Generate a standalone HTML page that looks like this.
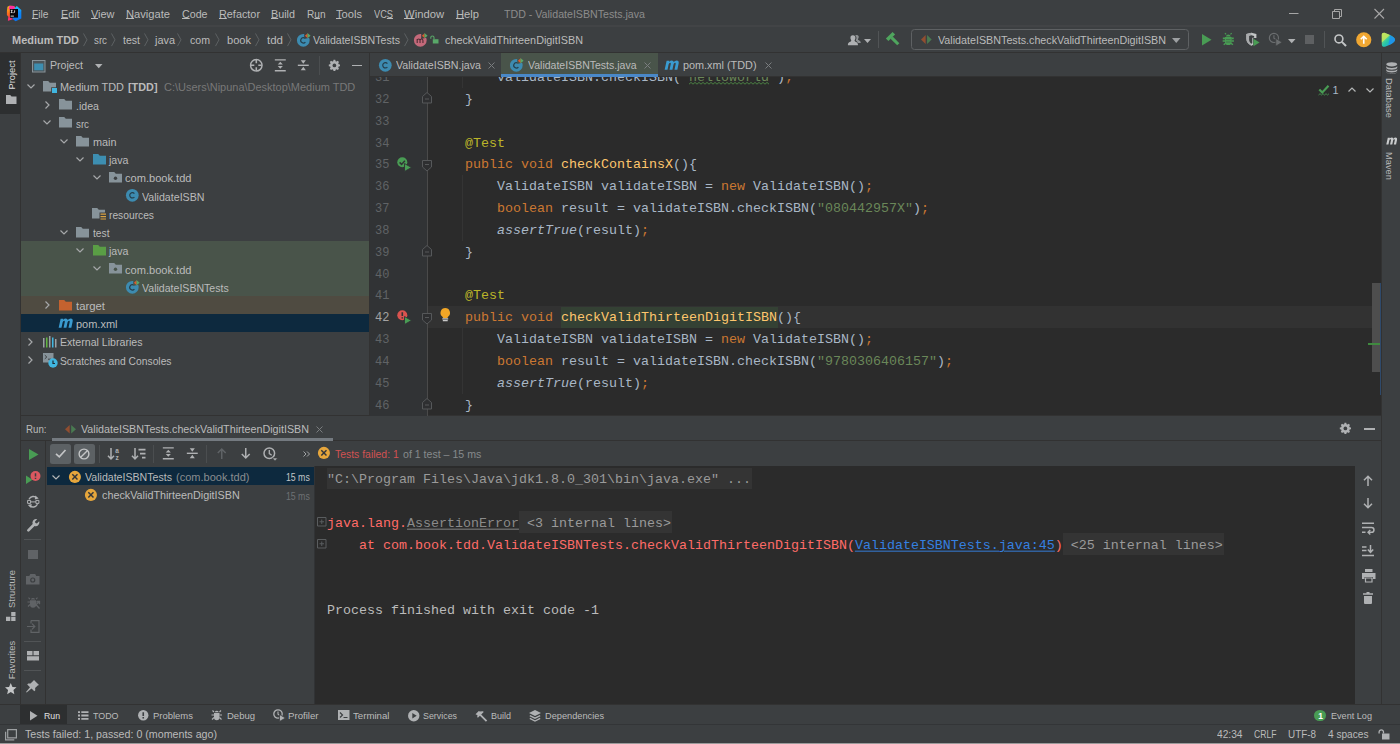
<!DOCTYPE html>
<html><head><meta charset="utf-8"><title>TDD</title>
<style>
*{box-sizing:border-box;margin:0;padding:0}
html,body{width:1400px;height:744px;overflow:hidden;background:#3c3f41}
body{font-family:"Liberation Sans",sans-serif;font-size:11px;color:#bbbbbb;position:relative}
.abs{position:absolute}
.t{position:absolute;white-space:pre;line-height:1;transform-origin:0 0}
svg{position:absolute;overflow:visible}
u{text-decoration-thickness:0.8px;text-underline-offset:0.2px}
.k{color:#cc7832}.s{color:#6a8759}.a{color:#bbb529}.m{color:#ffc66d}
.cl{position:absolute;white-space:pre;line-height:1;font-family:"Liberation Mono",monospace;font-size:13.333px;color:#a9b7c6;transform-origin:0 50%;transform:scaleY(0.94)}
.fold{background:#3a3a3a;color:#9a9a9a}

</style></head><body>
<div class="abs" style="left:0px;top:0px;width:1400px;height:27px;background:#3c3f41;"></div>
<div class="abs" style="left:0px;top:25.2px;width:1400px;height:2px;background:#424446;"></div>
<div class="abs" style="left:0px;top:27px;width:1400px;height:25px;background:#3c3f41;"></div>
<div class="abs" style="left:0px;top:52px;width:1400px;height:1px;background:#323232;"></div>
<div class="abs" style="left:0px;top:53px;width:20px;height:652px;background:#3c3f41;"></div>
<div class="abs" style="left:19.6px;top:53px;width:1px;height:652px;background:#323232;"></div>
<div class="abs" style="left:0px;top:53px;width:19.6px;height:61px;background:#2d2f30;"></div>
<div class="abs" style="left:20.6px;top:53px;width:348.4px;height:362px;background:#3c3f41;"></div>
<div class="abs" style="left:369px;top:53px;width:1px;height:362px;background:#323232;"></div>
<div class="abs" style="left:370px;top:53px;width:1011px;height:24px;background:#3c3f41;"></div>
<div class="abs" style="left:370px;top:76px;width:1011px;height:1px;background:#323232;"></div>
<div class="abs" style="left:370px;top:77px;width:1011px;height:339px;background:#2b2b2b;"></div>
<div class="abs" style="left:1381px;top:53px;width:19px;height:652px;background:#3c3f41;"></div>
<div class="abs" style="left:1381px;top:53px;width:1px;height:652px;background:#323232;"></div>
<div class="abs" style="left:21px;top:415px;width:1360px;height:1px;background:#323232;"></div>
<div class="abs" style="left:21px;top:416px;width:1360px;height:24px;background:#3c3f41;"></div>
<div class="abs" style="left:21px;top:440px;width:1360px;height:1px;background:#323232;"></div>
<div class="abs" style="left:21px;top:441px;width:1360px;height:264px;background:#3c3f41;"></div>
<div class="abs" style="left:45px;top:441px;width:1px;height:264px;background:#323232;"></div>
<div class="abs" style="left:314px;top:466px;width:1041px;height:239px;background:#2b2b2b;"></div>
<div class="abs" style="left:314px;top:466px;width:1px;height:239px;background:#313335;"></div>
<div class="abs" style="left:0px;top:704px;width:1400px;height:1px;background:#323232;"></div>
<div class="abs" style="left:0px;top:705px;width:1400px;height:19px;background:#3c3f41;"></div>
<div class="abs" style="left:0px;top:724px;width:1400px;height:1px;background:#333537;"></div>
<div class="abs" style="left:0px;top:725px;width:1400px;height:18px;background:#3c3f41;"></div>
<div class="abs" style="left:0px;top:742.6px;width:1400px;height:1.4px;background:#9a9a9a;"></div>
<svg style="left:6px;top:5px;" width="16" height="17" viewBox="6 5 16 17"><defs><linearGradient id="lgA" x1="0" y1="0" x2="0" y2="1"><stop offset="0" stop-color="#fdc21a"/><stop offset=".55" stop-color="#fc6a1d"/><stop offset="1" stop-color="#fe2d6b"/></linearGradient>
<linearGradient id="lgB" x1="0" y1="0" x2="0" y2="1"><stop offset="0" stop-color="#21d0fb"/><stop offset=".4" stop-color="#0e8cfb"/><stop offset="1" stop-color="#0a72f0"/></linearGradient></defs>
<polygon points="7.500,6.800 9.500,5.800 14,5.900 15.500,8.500 12,12 9,20.300 7.900,20.500 8.600,17 6.900,15 6.900,11" fill="url(#lgA)"/>
<polygon points="9.500,5.800 14,5.900 15.500,8.500 11,10 8.500,9" fill="#fe2e9d"/>
<polygon points="15.300,7.500 16.800,5.900 21.300,10 21.300,18.500 15.700,21.200 12.800,19.200 12,12" fill="url(#lgB)"/>
<polygon points="8.600,17 13.500,19 9,20.400 7.900,20.500" fill="#fe2d75"/>
<rect x="9.900" y="9" width="8.100" height="8.600" fill="#0a0508"/>
<rect x="10.600" y="15.700" width="3.300" height=".8" fill="#fff"/>
<path d="M10.700 10.300h1.900M11.650 10.300v2.300M10.700 12.600h1.900M14.600 10.300v1.700q0 .7-.8 .7h-.5" stroke="#fff" stroke-width=".75" fill="none"/></svg>
<div class="t" style="left:32px;top:8.76px;font-size:11.4px;color:#bbbbbb;transform:scaleX(0.8987);"><u>F</u>ile</div>
<div class="t" style="left:60.5px;top:8.76px;font-size:11.4px;color:#bbbbbb;transform:scaleX(0.9419);"><u>E</u>dit</div>
<div class="t" style="left:90.5px;top:8.76px;font-size:11.4px;color:#bbbbbb;transform:scaleX(0.9598);"><u>V</u>iew</div>
<div class="t" style="left:126px;top:8.76px;font-size:11.4px;color:#bbbbbb;transform:scaleX(0.9785);"><u>N</u>avigate</div>
<div class="t" style="left:181.5px;top:8.76px;font-size:11.4px;color:#bbbbbb;transform:scaleX(0.9363);"><u>C</u>ode</div>
<div class="t" style="left:219px;top:8.76px;font-size:11.4px;color:#bbbbbb;transform:scaleX(0.9521);"><u>R</u>efactor</div>
<div class="t" style="left:271px;top:8.76px;font-size:11.4px;color:#bbbbbb;transform:scaleX(0.9470);"><u>B</u>uild</div>
<div class="t" style="left:306.5px;top:8.76px;font-size:11.4px;color:#bbbbbb;transform:scaleX(0.8849);">R<u>u</u>n</div>
<div class="t" style="left:336px;top:8.76px;font-size:11.4px;color:#bbbbbb;transform:scaleX(0.9777);"><u>T</u>ools</div>
<div class="t" style="left:374px;top:8.76px;font-size:11.4px;color:#bbbbbb;transform:scaleX(0.8112);">VC<u>S</u></div>
<div class="t" style="left:404px;top:8.76px;font-size:11.4px;color:#bbbbbb;transform:scaleX(0.9873);"><u>W</u>indow</div>
<div class="t" style="left:456px;top:8.76px;font-size:11.4px;color:#bbbbbb;transform:scaleX(0.9813);"><u>H</u>elp</div>
<div class="t" style="left:503.5px;top:8.76px;font-size:11.4px;color:#8c8c8c;transform:scaleX(0.9332);">TDD - ValidateISBNTests.java</div>
<svg style="left:1288px;top:8px;" width="100" height="12" viewBox="0 0 100 12"><path d="M1 5.5h9.5" stroke="#a6a6a6" stroke-width="1" fill="none"/><path d="M44.5 3.5h7v7h-7zM46.5 3.5v-2h7v7h-2" stroke="#a6a6a6" stroke-width="1" fill="none"/><path d="M86.5 1l9.5 9.5M96 1l-9.5 9.5" stroke="#a6a6a6" stroke-width="1.1" fill="none"/></svg>
<div class="t" style="left:12px;top:34.76px;font-size:11.4px;color:#bbbbbb;font-weight:700;transform:scaleX(0.9625);">Medium TDD</div>
<div class="t" style="left:94px;top:34.76px;font-size:11.4px;color:#bbbbbb;transform:scaleX(0.8560);">src</div>
<div class="t" style="left:123px;top:34.76px;font-size:11.4px;color:#bbbbbb;transform:scaleX(0.9252);">test</div>
<div class="t" style="left:155px;top:34.76px;font-size:11.4px;color:#bbbbbb;transform:scaleX(0.9567);">java</div>
<div class="t" style="left:190px;top:34.76px;font-size:11.4px;color:#bbbbbb;transform:scaleX(0.9289);">com</div>
<div class="t" style="left:227px;top:34.76px;font-size:11.4px;color:#bbbbbb;transform:scaleX(0.9715);">book</div>
<div class="t" style="left:267px;top:34.76px;font-size:11.4px;color:#bbbbbb;transform:scaleX(1.0099);">tdd</div>
<div class="t" style="left:313px;top:34.76px;font-size:11.4px;color:#bbbbbb;transform:scaleX(0.9305);">ValidateISBNTests</div>
<div class="t" style="left:445px;top:34.76px;font-size:11.4px;color:#bbbbbb;transform:scaleX(0.9491);">checkValidThirteenDigitISBN</div>
<svg style="left:83px;top:33.2px;" width="4.5" height="13.6" viewBox="0 0 4.5 13.6"><path d="M0.5 0.5L4 6.800L0.5 13.100" stroke="#5c6062" stroke-width="1" fill="none"/></svg>
<svg style="left:111px;top:33.2px;" width="4.5" height="13.6" viewBox="0 0 4.5 13.6"><path d="M0.5 0.5L4 6.800L0.5 13.100" stroke="#5c6062" stroke-width="1" fill="none"/></svg>
<svg style="left:143.5px;top:33.2px;" width="4.5" height="13.6" viewBox="0 0 4.5 13.6"><path d="M0.5 0.5L4 6.800L0.5 13.100" stroke="#5c6062" stroke-width="1" fill="none"/></svg>
<svg style="left:177px;top:33.2px;" width="4.5" height="13.6" viewBox="0 0 4.5 13.6"><path d="M0.5 0.5L4 6.800L0.5 13.100" stroke="#5c6062" stroke-width="1" fill="none"/></svg>
<svg style="left:214.5px;top:33.2px;" width="4.5" height="13.6" viewBox="0 0 4.5 13.6"><path d="M0.5 0.5L4 6.800L0.5 13.100" stroke="#5c6062" stroke-width="1" fill="none"/></svg>
<svg style="left:254.5px;top:33.2px;" width="4.5" height="13.6" viewBox="0 0 4.5 13.6"><path d="M0.5 0.5L4 6.800L0.5 13.100" stroke="#5c6062" stroke-width="1" fill="none"/></svg>
<svg style="left:286.5px;top:33.2px;" width="4.5" height="13.6" viewBox="0 0 4.5 13.6"><path d="M0.5 0.5L4 6.800L0.5 13.100" stroke="#5c6062" stroke-width="1" fill="none"/></svg>
<svg style="left:404px;top:33.2px;" width="4.5" height="13.6" viewBox="0 0 4.5 13.6"><path d="M0.5 0.5L4 6.800L0.5 13.100" stroke="#5c6062" stroke-width="1" fill="none"/></svg>
<svg style="left:296.3px;top:32.7px;" width="14.6" height="14.6" viewBox="0 0 16 16"><path d="M8 1a7 7 0 1 0 7 7 7 7 0 0 0-.6-2.8L9 6.5V1.1A7 7 0 0 0 8 1z" fill="#3d8bb0"/><path d="M10.300 9.900a2.900 2.900 0 1 1-1.300-4.600" stroke="#20313b" stroke-width="1.300" fill="none" opacity=".85"/><path d="M9.8 3l3-2.8v5.6z" fill="#e05a2b"/><path d="M12.6 0l3.4 2.9-3.4 2.9z" fill="#59a869"/></svg>
<svg style="left:413px;top:32.7px;" width="14.6" height="14.6" viewBox="0 0 16 16"><path d="M8 1a7 7 0 1 0 7 7 7 7 0 0 0-.6-2.8L9 6.5V1.1A7 7 0 0 0 8 1z" fill="#c4697a"/><path d="M4.6 11V6.6M4.6 8q.2-1.4 1.6-1.4 1.5 0 1.5 1.6V11M7.7 8.2q.2-1.6 1.7-1.6 1.5 0 1.5 1.6V11" stroke="#3a2228" stroke-width="1.2" fill="none" opacity=".85"/><path d="M9.8 3l3-2.8v5.6z" fill="#e05a2b"/><path d="M12.6 0l3.4 2.9-3.4 2.9z" fill="#59a869"/></svg>
<svg style="left:429.5px;top:35px;" width="9" height="9" viewBox="0 0 9 9"><path d="M2.800 4.200h5.700v4.300H2.800z" fill="#59a869"/><path d="M4 4.200V2.600a1.600 1.600 0 0 0-3.200 0v1.200" stroke="#59a869" stroke-width="1.100" fill="none"/></svg>
<svg style="left:846.5px;top:32.5px;" width="14.6" height="14.6" viewBox="0 0 16 16"><path d="M10.5 2.2a2.3 2.3 0 0 1 2 3.6c-.2.5-.5.8-.5 1.300 0 .9 3 1 3 3.400V11h-3.300c0-2-2-2.300-2-3.100 0-.7.700-1 .700-2.400 0-1.300-.6-2.300-1.500-2.800.4-.3 1-.5 1.600-.5z" fill="#8f9294"/><path d="M6.500 2.500A2.700 2.700 0 0 1 9.200 5.400c0 1.600-.9 2-.9 3 0 1.200 3.700 1.200 3.700 4.200V13.500H1V12.600c0-3 3.700-3 3.700-4.200 0-1-.9-1.400-.9-3A2.700 2.700 0 0 1 6.500 2.500z" fill="#afb1b3"/></svg>
<svg style="left:863.5px;top:38.5px;" width="7" height="4" viewBox="0 0 7 4"><path d="M0 0h7L3.500 4z" fill="#afb1b3"/></svg>
<div class="abs" style="left:878px;top:31px;width:1px;height:17px;background:#515456;"></div>
<svg style="left:885.5px;top:32.3px;" width="14.6" height="14.6" viewBox="0 0 16 16"><g transform="rotate(-45 8 8)"><rect x="2.800" y="1.700" width="10.400" height="3.900" fill="#4fa55e"/><rect x="6.300" y="5.400" width="3.400" height="10.300" fill="#4fa55e"/></g></svg>
<div class="abs" style="left:911px;top:29px;width:278px;height:21px;border:1px solid #5e6163;border-radius:3.500px;background:#3c3f41"></div>
<svg style="left:920.7px;top:35.1px;" width="10.7" height="9" viewBox="0 0 10.700 9"><path d="M4.600 0v9L0 4.500z" fill="#914e30"/><path d="M6.100 0v9L10.700 4.500z" fill="#497a51"/></svg>
<div class="t" style="left:937.5px;top:34.76px;font-size:11.4px;color:#bbbbbb;transform:scaleX(0.9419);">ValidateISBNTests.checkValidThirteenDigitISBN</div>
<svg style="left:1172px;top:37.5px;" width="8.5" height="5" viewBox="0 0 8.500 5"><path d="M0 0h8.500L4.250 5z" fill="#9da0a2"/></svg>
<svg style="left:1201.5px;top:34px;" width="9.5" height="11.5" viewBox="0 0 9.500 11.500"><path d="M0 0L9.500 5.750 0 11.500z" fill="#499c54"/></svg>
<svg style="left:1221.3px;top:32.2px;" width="14.6" height="14.6" viewBox="0 0 16 16"><path d="M5.600 2.700L4.300 1.200M10.400 2.700l1.300-1.500" stroke="#499c54" stroke-width="1.300" fill="none"/><path d="M5.300 4.800a2.800 2.800 0 0 1 5.400 0z" fill="#499c54"/><path d="M4.300 5.600h7.400v5a3.700 3.700 0 0 1-7.400 0z" fill="#499c54"/><path d="M4.500 7H2M11.500 7H14M4.500 9.800H1.800M11.500 9.800h2.700M5 12.300l-2 1.700M11 12.300l2 1.700" stroke="#499c54" stroke-width="1.700" fill="none"/><path d="M5.500 8.300h5M5.500 11h5" stroke="#3c3f41" stroke-width=".9" opacity=".55"/></svg>
<svg style="left:1245px;top:32.2px;" width="14.6" height="14.6" viewBox="0 0 16 16"><path d="M1.500 2.300L7 .8l5.500 1.500v4.200H9V14l-2 1C3.500 13 1.500 10.800 1.500 7.300z" fill="#c4c6c7"/><path d="M7 .8V15C3.500 13 1.500 10.800 1.500 7.300V2.300z" fill="#a8aaac"/><path d="M4.500 4.300L7 3.600l3 .8v2H8v5.800l-1 .6c-1.700-1.200-2.500-2.500-2.500-4.500z" fill="#3c3f41"/><path d="M9.300 7.300l6.700 4.100-6.700 4.100z" fill="#499c54"/></svg>
<svg style="left:1267.5px;top:32.2px;" width="14.6" height="14.6" viewBox="0 0 16 16"><circle cx="6.500" cy="6.500" r="5" stroke="#6b6e70" stroke-width="1.300" fill="none"/><path d="M6.500 3.500v3.300l2 1.200" stroke="#6b6e70" stroke-width="1.200" fill="none"/><path d="M8.500 7l7 4.300-7 4.300z" fill="#6b6e70" stroke="#3c3f41" stroke-width=".8"/></svg>
<svg style="left:1288px;top:38.5px;" width="7.5" height="4.2" viewBox="0 0 7.500 4.200"><path d="M0 0h7.500L3.750 4.200z" fill="#afb1b3"/></svg>
<div class="abs" style="left:1305px;top:35px;width:9.3px;height:9.3px;background:#5e6062;"></div>
<div class="abs" style="left:1324px;top:31px;width:1px;height:17px;background:#515456;"></div>
<svg style="left:1333px;top:32.5px;" width="14.6" height="14.6" viewBox="0 0 16 16"><circle cx="6.500" cy="6.500" r="4.300" stroke="#c3c5c6" stroke-width="1.800" fill="none"/><path d="M9.700 9.700L14.300 14.300" stroke="#c3c5c6" stroke-width="2.200" fill="none"/></svg>
<svg style="left:1356px;top:32px;" width="15.5" height="15.5" viewBox="0 0 15.500 15.500"><circle cx="7.750" cy="7.750" r="7.600" fill="#f0a732"/><path d="M7.750 11.800V4.500M4.800 7.300l2.950-3 2.950 3" stroke="#fff" stroke-width="1.600" fill="none"/></svg>
<svg style="left:1380.5px;top:32px;" width="14.5" height="15.5" viewBox="0 0 14.500 15.500"><defs><linearGradient id="lg2" x1="0" y1="0" x2="1" y2="1"><stop offset="0" stop-color="#c9e45c"/><stop offset=".5" stop-color="#27c7a7"/><stop offset="1" stop-color="#1e8ff0"/></linearGradient></defs><path d="M.8 3C.8 1.200 2.300.3 4 .9c5 1.700 10 4 10 6.900s-5 5.200-10 6.900C2.300 15.300.8 14.300.8 12.500z" fill="url(#lg2)"/><path d="M.8 3C.8 1.200 2.300.3 4 .9c2 .7 3.500 1.300 5 2.100L.8 10.500z" fill="#c7e85a" opacity=".85"/><path d="M9 3c3 1.500 5 3 5 4.800 0 2-3 3.800-6.500 5.400z" fill="#1d8df2" opacity=".8"/></svg>
<div class="t" style="left:11.8px;top:75px;font-size:9.6px;color:#dcdcdc;transform:translate(-50%,-50%) rotate(-90deg) scaleX(0.97);transform-origin:50% 50%">Project</div>
<svg style="left:5.5px;top:95px;" width="10.5" height="9" viewBox="0 0 10.500 9"><path d="M0 0h4.200l1.300 1.500H10.500V9H0z" fill="#afb1b3"/></svg>
<div class="t" style="left:11.8px;top:588.5px;font-size:9.6px;color:#bbbbbb;transform:translate(-50%,-50%) rotate(-90deg) scaleX(0.97);transform-origin:50% 50%">Structure</div>
<svg style="left:6px;top:612px;" width="9.5" height="9" viewBox="0 0 9.500 9"><path d="M0 4.800h4.300V9H0zM5.200 4.800h4.300V9H5.200zM5.200 0h4.300v4H5.200z" fill="#afb1b3"/></svg>
<div class="t" style="left:11.8px;top:659.5px;font-size:9.6px;color:#bbbbbb;transform:translate(-50%,-50%) rotate(-90deg) scaleX(0.97);transform-origin:50% 50%">Favorites</div>
<svg style="left:5px;top:682.5px;" width="11.5" height="11.5" viewBox="0 0 11.500 11.500"><path d="M5.750 0l1.700 3.900 4.050.4-3.050 2.800.9 4.100-3.600-2.200-3.600 2.200.9-4.100L0 4.300l4.050-.4z" fill="#c4c6c7"/></svg>
<svg style="left:1385.5px;top:61.5px;" width="11.5" height="12" viewBox="0 0 11.500 12"><ellipse cx="5.750" cy="2.300" rx="5.500" ry="2.100" fill="#afb1b3"/><path d="M.25 4c0 2.600 11 2.600 11 0v1.700c0 2.600-11 2.600-11 0zM.25 6.900c0 2.600 11 2.600 11 0v1.700c0 2.600-11 2.600-11 0zM.25 9.800c0 2.600 11 2.600 11 0v0c0 3-11 3-11 0z" fill="#afb1b3"/></svg>
<div class="t" style="left:1389.3px;top:97.5px;font-size:9.6px;color:#bbbbbb;transform:translate(-50%,-50%) rotate(90deg) scaleX(0.97);transform-origin:50% 50%">Database</div>
<svg style="left:1384.5px;top:133.5px;" width="13.5" height="13.5" viewBox="0 0 16 16"><path d="M1.500 12.500L3.300 4.300H5.800L5.600 5.400Q6.700 4.100 8.100 4.100 9.600 4.100 9.800 5.500 11 4.100 12.500 4.100 14.800 4.100 14.300 6.800L13.100 12.500H10.500L11.600 7.300Q11.800 6.200 11 6.200 10 6.200 9.600 7.800L8.600 12.500H6L7.100 7.300Q7.300 6.200 6.500 6.200 5.500 6.200 5.100 7.800L4.100 12.500z" fill="#c9cbcc"/></svg>
<div class="t" style="left:1389.3px;top:166px;font-size:9.6px;color:#bbbbbb;transform:translate(-50%,-50%) rotate(90deg) scaleX(0.97);transform-origin:50% 50%">Maven</div>
<svg style="left:32px;top:59.5px;" width="13.5" height="12.5" viewBox="0 0 13.500 12.500"><rect x=".5" y=".5" width="12.500" height="11.500" fill="#4d565b" stroke="#87939a" stroke-width="1"/><rect x="2.200" y="3.500" width="9.100" height="6.800" fill="#3d8eb1"/></svg>
<div class="t" style="left:50px;top:60.26px;font-size:11.4px;color:#bbbbbb;transform:scaleX(0.9308);">Project</div>
<svg style="left:95px;top:63.8px;" width="7.5" height="4.3" viewBox="0 0 7.500 4.300"><path d="M0 0h7.500L3.750 4.300z" fill="#afb1b3"/></svg>
<svg style="left:248.7px;top:58.2px;" width="14.6" height="14.6" viewBox="0 0 16 16"><circle cx="8" cy="8" r="6.300" stroke="#afb1b3" stroke-width="1.600" fill="none"/><path d="M8 2v3.800M8 10.200V14M2 8h3.800M10.200 8H14" stroke="#afb1b3" stroke-width="1.700" fill="none"/></svg>
<svg style="left:273px;top:58.2px;" width="14.6" height="14.6" viewBox="0 0 16 16"><path d="M2 2h12M2 14h12" stroke="#afb1b3" stroke-width="1.500"/><path d="M8 4.200L5.200 7.200h5.600zM8 11.800l-2.800-3h5.600z" fill="#afb1b3"/></svg>
<svg style="left:296px;top:58.2px;" width="14.6" height="14.6" viewBox="0 0 16 16"><path d="M2 8h12" stroke="#afb1b3" stroke-width="1.500"/><path d="M8 6.300L5.200 2.500h5.600zM8 9.700l-2.800 3.800h5.600z" fill="#afb1b3"/></svg>
<div class="abs" style="left:318.5px;top:56px;width:1px;height:19px;background:#4b4e50;"></div>
<svg style="left:327.6px;top:59px;" width="12.8" height="12.8" viewBox="0 0 16 16"><path d="M8 1.300l1.100.1.400 1.700 1.200.5 1.500-.9 1.500 1.500-.9 1.500.5 1.200 1.700.4v2.200l-1.700.4-.5 1.200.9 1.500-1.500 1.500-1.500-.9-1.200.5-.4 1.700H6.900l-.4-1.700-1.200-.5-1.500.9-1.500-1.500.9-1.500-.5-1.200L1 9.500V7.300l1.700-.4.500-1.200-.9-1.500 1.500-1.500 1.500.9 1.200-.5.400-1.700z" fill="#afb1b3" transform="translate(0 -.4)"/><circle cx="8" cy="8" r="2.300" fill="#3c3f41"/></svg>
<div class="abs" style="left:351.5px;top:64.8px;width:10.5px;height:1.5px;background:#afb1b3;"></div>
<div class="abs" style="left:20.6px;top:241.26999999999998px;width:348.4px;height:54.69px;background:#49544a;"></div>
<div class="abs" style="left:20.6px;top:295.96px;width:348.4px;height:18.23px;background:#4f4b41;"></div>
<div class="abs" style="left:20.6px;top:314.19px;width:348.4px;height:18.23px;background:#0d293e;"></div>
<svg style="left:27px;top:84.015px;" width="8" height="5" viewBox="0 0 8 5"><path d="M.5.500L4 4l3.500-3.500" stroke="#a6a8aa" stroke-width="1.200" fill="none"/></svg>
<svg style="left:43px;top:80.815px;" width="13" height="10.5" viewBox="0 0 13 10.500"><path d="M0 0h5.200l1.600 1.800H13V10.500H0z" fill="#87939a"/><rect x="8.200" y="6.300" width="6" height="6" fill="#3c3f41"/><rect x="9" y="7" width="5" height="5" fill="#40b6e0"/></svg>
<div class="t" style="left:60px;top:82.27px;font-size:11.4px;color:#bbbbbb;transform:scaleX(0.9568);">Medium TDD</div>
<div class="t" style="left:128px;top:82.27px;font-size:11.4px;color:#bbbbbb;font-weight:700;transform:scaleX(0.9516);">[TDD]</div>
<div class="t" style="left:163.7px;top:82.27px;font-size:11.4px;color:#787878;transform:scaleX(0.9634);">C:\Users\Nipuna\Desktop\Medium TDD</div>
<svg style="left:44.5px;top:100.545px;" width="5" height="8" viewBox="0 0 5 8"><path d="M.5.500L4 4 .5 7.500" stroke="#a6a8aa" stroke-width="1.200" fill="none"/></svg>
<svg style="left:59px;top:99.045px;" width="13" height="10.5" viewBox="0 0 13 10.500"><path d="M0 0h5.200l1.600 1.800H13V10.500H0z" fill="#87939a"/></svg>
<div class="t" style="left:76px;top:100.50px;font-size:11.4px;color:#bbbbbb;transform:scaleX(0.9311);">.idea</div>
<svg style="left:43px;top:120.475px;" width="8" height="5" viewBox="0 0 8 5"><path d="M.5.500L4 4l3.500-3.500" stroke="#a6a8aa" stroke-width="1.200" fill="none"/></svg>
<svg style="left:59px;top:117.27499999999999px;" width="13" height="10.5" viewBox="0 0 13 10.500"><path d="M0 0h5.200l1.600 1.800H13V10.500H0z" fill="#87939a"/></svg>
<div class="t" style="left:76px;top:118.73px;font-size:11.4px;color:#bbbbbb;transform:scaleX(0.8560);">src</div>
<svg style="left:59.5px;top:138.70499999999998px;" width="8" height="5" viewBox="0 0 8 5"><path d="M.5.500L4 4l3.500-3.500" stroke="#a6a8aa" stroke-width="1.200" fill="none"/></svg>
<svg style="left:76px;top:135.505px;" width="13" height="10.5" viewBox="0 0 13 10.500"><path d="M0 0h5.200l1.600 1.800H13V10.500H0z" fill="#87939a"/></svg>
<div class="t" style="left:92.5px;top:136.96px;font-size:11.4px;color:#bbbbbb;transform:scaleX(0.9513);">main</div>
<svg style="left:76px;top:156.935px;" width="8" height="5" viewBox="0 0 8 5"><path d="M.5.500L4 4l3.500-3.500" stroke="#a6a8aa" stroke-width="1.200" fill="none"/></svg>
<svg style="left:92.5px;top:153.735px;" width="13" height="10.5" viewBox="0 0 13 10.500"><path d="M0 0h5.200l1.600 1.800H13V10.500H0z" fill="#3d8eb1"/></svg>
<div class="t" style="left:109px;top:155.19px;font-size:11.4px;color:#bbbbbb;transform:scaleX(0.9327);">java</div>
<svg style="left:92.5px;top:175.16500000000002px;" width="8" height="5" viewBox="0 0 8 5"><path d="M.5.500L4 4l3.500-3.500" stroke="#a6a8aa" stroke-width="1.200" fill="none"/></svg>
<svg style="left:109px;top:171.96500000000003px;" width="13" height="10.5" viewBox="0 0 13 10.500"><path d="M0 0h5.200l1.600 1.800H13V10.500H0z" fill="#87939a"/><circle cx="6.500" cy="6.300" r="1.700" fill="#3c3f41"/></svg>
<div class="t" style="left:125px;top:173.42px;font-size:11.4px;color:#bbbbbb;transform:scaleX(0.9724);">com.book.tdd</div>
<svg style="left:124.5px;top:188.39499999999998px;" width="14.6" height="14.6" viewBox="0 0 16 16"><circle cx="8" cy="8" r="7" fill="#3d8bb0"/><path d="M10.300 9.900a2.900 2.900 0 1 1 0-3.800" stroke="#20313b" stroke-width="1.300" fill="none" opacity=".85"/></svg>
<div class="t" style="left:142px;top:191.65px;font-size:11.4px;color:#bbbbbb;transform:scaleX(0.9341);">ValidateISBN</div>
<svg style="left:92px;top:208.425px;" width="13" height="10.5" viewBox="0 0 13 10.500"><path d="M0 0h5.200l1.600 1.800H13V10.500H0z" fill="#87939a"/><rect x="7.500" y="4.500" width="7" height="8" fill="#3c3f41"/><path d="M8.500 6.200h5.500M8.500 8.600h5.500M8.500 11h5.500" stroke="#d9a343" stroke-width="1.200"/></svg>
<div class="t" style="left:109px;top:209.88px;font-size:11.4px;color:#bbbbbb;transform:scaleX(0.8997);">resources</div>
<svg style="left:59.5px;top:229.85500000000002px;" width="8" height="5" viewBox="0 0 8 5"><path d="M.5.500L4 4l3.500-3.500" stroke="#a6a8aa" stroke-width="1.200" fill="none"/></svg>
<svg style="left:76px;top:226.65500000000003px;" width="13" height="10.5" viewBox="0 0 13 10.500"><path d="M0 0h5.200l1.600 1.800H13V10.500H0z" fill="#87939a"/></svg>
<div class="t" style="left:92.5px;top:228.11px;font-size:11.4px;color:#bbbbbb;transform:scaleX(0.8980);">test</div>
<svg style="left:76px;top:248.08499999999998px;" width="8" height="5" viewBox="0 0 8 5"><path d="M.5.500L4 4l3.500-3.500" stroke="#a6a8aa" stroke-width="1.200" fill="none"/></svg>
<svg style="left:92.5px;top:244.885px;" width="13" height="10.5" viewBox="0 0 13 10.500"><path d="M0 0h5.200l1.600 1.800H13V10.500H0z" fill="#5a9e45"/></svg>
<div class="t" style="left:109px;top:246.34px;font-size:11.4px;color:#bbbbbb;transform:scaleX(0.9327);">java</div>
<svg style="left:92.5px;top:266.315px;" width="8" height="5" viewBox="0 0 8 5"><path d="M.5.500L4 4l3.500-3.500" stroke="#a6a8aa" stroke-width="1.200" fill="none"/></svg>
<svg style="left:109px;top:263.115px;" width="13" height="10.5" viewBox="0 0 13 10.500"><path d="M0 0h5.200l1.600 1.800H13V10.500H0z" fill="#87939a"/><circle cx="6.500" cy="6.300" r="1.700" fill="#49544a"/></svg>
<div class="t" style="left:125px;top:264.57px;font-size:11.4px;color:#bbbbbb;transform:scaleX(0.9724);">com.book.tdd</div>
<svg style="left:124.5px;top:279.545px;" width="14.6" height="14.6" viewBox="0 0 16 16"><path d="M8 1a7 7 0 1 0 7 7 7 7 0 0 0-.6-2.8L9 6.5V1.1A7 7 0 0 0 8 1z" fill="#3d8bb0"/><path d="M10.300 9.900a2.900 2.900 0 1 1-1.300-4.600" stroke="#20313b" stroke-width="1.300" fill="none" opacity=".85"/><path d="M9.8 3l3-2.8v5.6z" fill="#e05a2b"/><path d="M12.6 0l3.4 2.9-3.4 2.9z" fill="#59a869"/></svg>
<div class="t" style="left:142px;top:282.80px;font-size:11.4px;color:#bbbbbb;transform:scaleX(0.9278);">ValidateISBNTests</div>
<svg style="left:44.5px;top:301.075px;" width="5" height="8" viewBox="0 0 5 8"><path d="M.5.500L4 4 .5 7.500" stroke="#a6a8aa" stroke-width="1.200" fill="none"/></svg>
<svg style="left:59px;top:299.575px;" width="13" height="10.5" viewBox="0 0 13 10.500"><path d="M0 0h5.200l1.600 1.800H13V10.500H0z" fill="#c4622f"/></svg>
<div class="t" style="left:76px;top:301.03px;font-size:11.4px;color:#bbbbbb;transform:scaleX(0.9952);">target</div>
<svg style="left:56.8px;top:314.39px;" width="17.5" height="17.5" viewBox="0 0 16 16"><path d="M1.500 12.500L3.300 4.300H5.800L5.600 5.400Q6.700 4.100 8.100 4.100 9.600 4.100 9.800 5.500 11 4.100 12.500 4.100 14.800 4.100 14.300 6.800L13.100 12.500H10.500L11.600 7.300Q11.800 6.200 11 6.200 10 6.200 9.600 7.800L8.600 12.500H6L7.100 7.300Q7.300 6.200 6.500 6.200 5.500 6.200 5.100 7.800L4.100 12.500z" fill="#3a9bd0"/></svg>
<div class="t" style="left:76px;top:319.26px;font-size:11.4px;color:#bbbbbb;transform:scaleX(0.9641);">pom.xml</div>
<svg style="left:27.5px;top:337.535px;" width="5" height="8" viewBox="0 0 5 8"><path d="M.5.500L4 4 .5 7.500" stroke="#a6a8aa" stroke-width="1.200" fill="none"/></svg>
<svg style="left:43px;top:335.92px;" width="13.5" height="11.5" viewBox="0 0 13.500 11.500"><path d="M.75 2v9.500M12.750 3v8.500" stroke="#9aa0a4" stroke-width="1.500"/><path d="M3.750 1.500v10" stroke="#62b543" stroke-width="1.500"/><path d="M6.750 0v11.500" stroke="#9aa0a4" stroke-width="1.500"/><path d="M9.750 1.500v10" stroke="#40b6e0" stroke-width="1.500"/></svg>
<div class="t" style="left:59.5px;top:337.49px;font-size:11.4px;color:#bbbbbb;transform:scaleX(0.9307);">External Libraries</div>
<svg style="left:27.5px;top:355.765px;" width="5" height="8" viewBox="0 0 5 8"><path d="M.5.500L4 4 .5 7.500" stroke="#a6a8aa" stroke-width="1.200" fill="none"/></svg>
<svg style="left:43px;top:352.65px;" width="15" height="15" viewBox="0 0 15 15"><path d="M0 0h10.500v7H6.500v2.500H0z" fill="#87939a"/><path d="M1.800 2.200l2 1.800-2 1.800" stroke="#3c3f41" stroke-width="1" fill="none"/><path d="M5 6.200h3" stroke="#3c3f41" stroke-width="1"/><circle cx="10" cy="10" r="4.700" fill="#40b6e0"/><path d="M10 7.500v3h2" stroke="#1c2a33" stroke-width="1.200" fill="none"/></svg>
<div class="t" style="left:59.5px;top:355.72px;font-size:11.4px;color:#bbbbbb;transform:scaleX(0.9031);">Scratches and Consoles</div>
<svg style="left:377.7px;top:57.7px;" width="14.6" height="14.6" viewBox="0 0 16 16"><circle cx="8" cy="8" r="7" fill="#3d8bb0"/><path d="M10.300 9.900a2.900 2.900 0 1 1 0-3.800" stroke="#20313b" stroke-width="1.300" fill="none" opacity=".85"/></svg>
<div class="t" style="left:396px;top:59.76px;font-size:11.4px;color:#bbbbbb;transform:scaleX(0.9344);">ValidateISBN.java</div>
<svg style="left:488px;top:61.5px;" width="7" height="7" viewBox="0 0 7 7"><path d="M.5.500l6 6M6.500.500l-6 6" stroke="#7a7d7f" stroke-width="1" fill="none"/></svg>
<div class="abs" style="left:501px;top:53px;width:157px;height:24px;background:#49544a;"></div>
<div class="abs" style="left:501px;top:74px;width:157px;height:3px;background:#4a88c7;"></div>
<svg style="left:509.2px;top:57.7px;" width="14.6" height="14.6" viewBox="0 0 16 16"><path d="M8 1a7 7 0 1 0 7 7 7 7 0 0 0-.6-2.8L9 6.5V1.1A7 7 0 0 0 8 1z" fill="#3d8bb0"/><path d="M10.300 9.900a2.900 2.900 0 1 1-1.300-4.600" stroke="#20313b" stroke-width="1.300" fill="none" opacity=".85"/><path d="M9.8 3l3-2.8v5.6z" fill="#e05a2b"/><path d="M12.6 0l3.4 2.9-3.4 2.9z" fill="#59a869"/></svg>
<div class="t" style="left:527.5px;top:59.76px;font-size:11.4px;color:#bbbbbb;transform:scaleX(0.9229);">ValidateISBNTests.java</div>
<svg style="left:644px;top:61.5px;" width="7" height="7" viewBox="0 0 7 7"><path d="M.5.500l6 6M6.500.500l-6 6" stroke="#7a7d7f" stroke-width="1" fill="none"/></svg>
<svg style="left:662.5px;top:56px;" width="17.5" height="17.5" viewBox="0 0 16 16"><path d="M1.500 12.500L3.300 4.300H5.800L5.600 5.400Q6.700 4.100 8.100 4.100 9.600 4.100 9.800 5.500 11 4.100 12.500 4.100 14.800 4.100 14.300 6.800L13.100 12.500H10.500L11.600 7.300Q11.800 6.200 11 6.200 10 6.200 9.600 7.800L8.600 12.500H6L7.100 7.300Q7.300 6.200 6.500 6.200 5.500 6.200 5.100 7.800L4.100 12.500z" fill="#3a9bd0"/></svg>
<div class="t" style="left:683px;top:59.76px;font-size:11.4px;color:#bbbbbb;transform:scaleX(0.9520);">pom.xml (TDD)</div>
<svg style="left:765px;top:61.5px;" width="7" height="7" viewBox="0 0 7 7"><path d="M.5.500l6 6M6.500.500l-6 6" stroke="#7a7d7f" stroke-width="1" fill="none"/></svg>
<div class="abs" style="left:370px;top:77px;width:57px;height:339px;background:#313335;"></div>
<div class="abs" style="left:427px;top:77px;width:1px;height:339px;background:#4a4a4a;"></div>
<div class="abs" style="left:428px;top:306.25px;width:953px;height:21.8px;background:#323232;"></div>
<div class="abs" style="left:561px;top:306.75px;width:216.5px;height:21.3px;background:#344134;"></div>
<div class="abs" style="left:462px;top:175.11px;width:1px;height:65.52px;background:#343434;"></div>
<div class="abs" style="left:462px;top:327.99px;width:1px;height:65.52px;background:#343434;"></div>
<div class="abs" style="left:462px;top:77px;width:1px;height:10.909999999999997px;background:#343434;"></div>
<div class="abs" style="left:373.700px;top:77px;width:30px;height:14px;overflow:hidden"><div class="cl" style="left:1px;top:-5.99px;color:#606366;transform:scale(0.9,0.92)">31</div></div>
<div class="cl" style="left:374.700px;top:92.85px;color:#606366;transform:scale(0.9,0.92)">32</div>
<div class="cl" style="left:374.700px;top:114.69px;color:#606366;transform:scale(0.9,0.92)">33</div>
<div class="cl" style="left:374.700px;top:136.53px;color:#606366;transform:scale(0.9,0.92)">34</div>
<div class="cl" style="left:374.700px;top:158.37px;color:#606366;transform:scale(0.9,0.92)">35</div>
<div class="cl" style="left:374.700px;top:180.21px;color:#606366;transform:scale(0.9,0.92)">36</div>
<div class="cl" style="left:374.700px;top:202.05px;color:#606366;transform:scale(0.9,0.92)">37</div>
<div class="cl" style="left:374.700px;top:223.89px;color:#606366;transform:scale(0.9,0.92)">38</div>
<div class="cl" style="left:374.700px;top:245.73px;color:#606366;transform:scale(0.9,0.92)">39</div>
<div class="cl" style="left:374.700px;top:267.57px;color:#606366;transform:scale(0.9,0.92)">40</div>
<div class="cl" style="left:374.700px;top:289.41px;color:#606366;transform:scale(0.9,0.92)">41</div>
<div class="cl" style="left:374.700px;top:311.25px;color:#a4a3a3;transform:scale(0.9,0.92)">42</div>
<div class="cl" style="left:374.700px;top:333.09px;color:#606366;transform:scale(0.9,0.92)">43</div>
<div class="cl" style="left:374.700px;top:354.93px;color:#606366;transform:scale(0.9,0.92)">44</div>
<div class="cl" style="left:374.700px;top:376.77px;color:#606366;transform:scale(0.9,0.92)">45</div>
<div class="cl" style="left:374.700px;top:398.61px;color:#606366;transform:scale(0.9,0.92)">46</div>
<div class="abs" style="left:465px;top:77px;width:600px;height:14px;overflow:hidden"><div class="cl" style="left:0;top:-5.99px">    validateISBN.checkISBN(<span class="s">"helloworld"</span>)<span class="k">;</span></div></div>
<div class="cl" style="left:465px;top:92.85px">}</div>
<div class="cl" style="left:465px;top:136.53px"><span class="a">@Test</span></div>
<div class="cl" style="left:465px;top:158.37px"><span class="k">public void </span><span class="m">checkContainsX</span>(){</div>
<div class="cl" style="left:465px;top:180.21px">    ValidateISBN validateISBN = <span class="k">new </span>ValidateISBN()<span class="k">;</span></div>
<div class="cl" style="left:465px;top:202.05px">    <span class="k">boolean </span>result = validateISBN.checkISBN(<span class="s">"080442957X"</span>)<span class="k">;</span></div>
<div class="cl" style="left:465px;top:223.89px">    <i>assertTrue</i>(result)<span class="k">;</span></div>
<div class="cl" style="left:465px;top:245.73px">}</div>
<div class="cl" style="left:465px;top:289.41px"><span class="a">@Test</span></div>
<div class="cl" style="left:465px;top:311.25px"><span class="k">public void </span><span class="m">checkValidThirteenDigitISBN</span>(){</div>
<div class="cl" style="left:465px;top:333.09px">    ValidateISBN validateISBN = <span class="k">new </span>ValidateISBN()<span class="k">;</span></div>
<div class="cl" style="left:465px;top:354.93px">    <span class="k">boolean </span>result = validateISBN.checkISBN(<span class="s">"9780306406157"</span>)<span class="k">;</span></div>
<div class="cl" style="left:465px;top:376.77px">    <i>assertTrue</i>(result)<span class="k">;</span></div>
<div class="cl" style="left:465px;top:398.61px">}</div>
<svg style="left:689px;top:81.8px;" width="80" height="3" viewBox="0 0 80 3"><path d="M0 2.200L2 0.4L4 2.2L6 0.4L8 2.2L10 0.4L12 2.2L14 0.4L16 2.2L18 0.4L20 2.2L22 0.4L24 2.2L26 0.4L28 2.2L30 0.4L32 2.2L34 0.4L36 2.2L38 0.4L40 2.2L42 0.4L44 2.2L46 0.4L48 2.2L50 0.4L52 2.2L54 0.4L56 2.2L58 0.4L60 2.2L62 0.4L64 2.2L66 0.4L68 2.2L70 0.4L72 2.2L74 0.4L76 2.2L78 0.4L80 2.2" stroke="#4e8a45" stroke-width=".9" fill="none"/></svg>
<svg style="left:422px;top:92.45px;" width="10" height="11.5" viewBox="0 0 10 11.500"><path d="M.5 11V4.500L5 .5l4.500 4V11z" fill="#2e2f31" stroke="#56585a" stroke-width="1"/><path d="M3 7h4" stroke="#56585a" stroke-width="1"/></svg>
<svg style="left:422px;top:245.32999999999998px;" width="10" height="11.5" viewBox="0 0 10 11.500"><path d="M.5 11V4.500L5 .5l4.500 4V11z" fill="#2e2f31" stroke="#56585a" stroke-width="1"/><path d="M3 7h4" stroke="#56585a" stroke-width="1"/></svg>
<svg style="left:422px;top:398.21px;" width="10" height="11.5" viewBox="0 0 10 11.500"><path d="M.5 11V4.500L5 .5l4.500 4V11z" fill="#2e2f31" stroke="#56585a" stroke-width="1"/><path d="M3 7h4" stroke="#56585a" stroke-width="1"/></svg>
<svg style="left:422px;top:159.86999999999998px;" width="10" height="11.5" viewBox="0 0 10 11.500"><path d="M.5.500v6.500L5 11l4.500-4V.5z" fill="#2e2f31" stroke="#56585a" stroke-width="1"/><path d="M3 4.500h4" stroke="#56585a" stroke-width="1"/></svg>
<svg style="left:422px;top:312.75px;" width="10" height="11.5" viewBox="0 0 10 11.500"><path d="M.5.500v6.500L5 11l4.500-4V.5z" fill="#2e2f31" stroke="#56585a" stroke-width="1"/><path d="M3 4.500h4" stroke="#56585a" stroke-width="1"/></svg>
<svg style="left:396.5px;top:156.57px;" width="14.5" height="14.5" viewBox="0 0 14.500 14.500"><circle cx="5.300" cy="5.300" r="5" fill="#499c54"/><path d="M2.600 5.400l2 2 3.300-3.600" stroke="#313335" stroke-width="1.500" fill="none"/><path d="M7.500 6.500l7 4-7 4z" fill="#499c54" stroke="#313335" stroke-width=".9"/></svg>
<svg style="left:396.5px;top:310.25px;" width="14.5" height="14.5" viewBox="0 0 14.500 14.500"><circle cx="5.300" cy="5.300" r="5" fill="#d9534f"/><path d="M5.300 2.300v3.600M5.300 7.300v1.300" stroke="#313335" stroke-width="1.600" fill="none"/><path d="M7.500 6.500l7 4-7 4z" fill="#499c54" stroke="#313335" stroke-width=".9"/></svg>
<svg style="left:439.9px;top:307.84999999999997px;" width="10.5" height="13.5" viewBox="0 0 10.500 13.500"><path d="M5.250 0a4.800 4.800 0 0 1 3 8.500c-.5.500-.7 1-.7 1.500H2.950c0-.5-.2-1-.7-1.500A4.800 4.800 0 0 1 5.250 0z" fill="#f2a626"/><path d="M2.300 10.900h5.900M2.800 12.600h4.900" stroke="#c9c9c9" stroke-width="1.100"/></svg>
<svg style="left:1317.5px;top:85px;" width="12" height="11.5" viewBox="0 0 12 11.500"><path d="M1.300 4.500l3 3L10.500.800" stroke="#499c54" stroke-width="2.200" fill="none"/><path d="M.5 10l1.500-1.300L3.500 10 5 8.700 6.500 10 8 8.700 9.500 10 11 8.700" stroke="#499c54" stroke-width=".8" fill="none"/></svg>
<div class="t" style="left:1332.5px;top:85.27px;font-size:11px;color:#a9b7c6;transform:scaleX(1.0000);">1</div>
<svg style="left:1347.5px;top:87px;" width="8" height="5" viewBox="0 0 8 5"><path d="M.5 4.500L4 1l3.500 3.500" stroke="#b4b6b7" stroke-width="1.200" fill="none"/></svg>
<svg style="left:1366px;top:88px;" width="8" height="5" viewBox="0 0 8 5"><path d="M.5.500L4 4 7.500.500" stroke="#b4b6b7" stroke-width="1.200" fill="none"/></svg>
<div class="abs" style="left:1372px;top:282.5px;width:8.5px;height:89px;background:#4e4e4e;"></div>
<div class="abs" style="left:1368px;top:343.3px;width:12.5px;height:1.5px;background:#3f8a3f;"></div>
<div class="abs" style="left:1380px;top:283px;width:1px;height:112px;background:#2f4a6b;"></div>
<div class="t" style="left:25.75px;top:423.96px;font-size:11.4px;color:#bbbbbb;transform:scaleX(0.8519);">Run:</div>
<svg style="left:64.5px;top:424.8px;" width="11" height="8.5" viewBox="0 0 11 8.500"><path d="M4.700 0v8.500L0 4.250z" fill="#914e30"/><path d="M6.200 0v8.500L11 4.250z" fill="#497a51"/></svg>
<div class="t" style="left:81.25px;top:423.96px;font-size:11.4px;color:#bbbbbb;transform:scaleX(0.9419);">ValidateISBNTests.checkValidThirteenDigitISBN</div>
<svg style="left:316px;top:425.7px;" width="7" height="7" viewBox="0 0 7 7"><path d="M.5.500l6 6M6.500.500l-6 6" stroke="#7a7d7f" stroke-width="1" fill="none"/></svg>
<div class="abs" style="left:52px;top:438px;width:281px;height:3px;background:#747a80;"></div>
<svg style="left:1338.8px;top:422.3px;" width="12.8" height="12.8" viewBox="0 0 16 16"><path d="M8 1.300l1.100.1.400 1.700 1.200.5 1.500-.9 1.500 1.500-.9 1.500.5 1.200 1.700.4v2.200l-1.700.4-.5 1.200.9 1.500-1.500 1.500-1.500-.9-1.200.5-.4 1.700H6.900l-.4-1.700-1.200-.5-1.500.9-1.500-1.500.9-1.500-.5-1.200L1 9.500V7.300l1.700-.4.500-1.200-.9-1.500 1.500-1.500 1.500.9 1.200-.5.400-1.700z" fill="#afb1b3" transform="translate(0 -.4)"/><circle cx="8" cy="8" r="2.300" fill="#3c3f41"/></svg>
<div class="abs" style="left:1363.75px;top:428px;width:11px;height:1.5px;background:#afb1b3;"></div>
<svg style="left:28.75px;top:448.75px;" width="9.5" height="11" viewBox="0 0 9.500 11"><path d="M0 0l9.500 5.500L0 11z" fill="#499c54"/></svg>
<svg style="left:25.5px;top:470.5px;" width="15" height="14" viewBox="0 0 15 14"><path d="M0 4.500l6.500 4.300L0 13z" fill="#499c54"/><circle cx="9.500" cy="5" r="5" fill="#db5860"/><path d="M9.500 2.200v3.300M9.500 6.800v1.200" stroke="#3c3f41" stroke-width="1.500" fill="none"/></svg>
<svg style="left:26.5px;top:495px;" width="12.5" height="13.5" viewBox="0 0 12.500 13.500"><path d="M2 4.200A5 5 0 0 1 10 3M10.500 9.300A5 5 0 0 1 2.500 10.500" stroke="#afb1b3" stroke-width="1.400" fill="none"/><path d="M8.300 .5l3.400 2.900-3.900 1.100zM4.200 13l-3.400-2.900 3.900-1.100z" fill="#afb1b3"/><path d="M.6 5.400h3v3h-3zM8.900 5.400h3v3h-3z" fill="#3c3f41" stroke="#afb1b3" stroke-width="1"/><path d="M3.600 6.900h5.300" stroke="#afb1b3" stroke-width="1"/></svg>
<svg style="left:27px;top:518.5px;" width="12.5" height="12.5" viewBox="0 0 12.500 12.500"><path d="M8.800 0a3.700 3.700 0 0 1 1.500.3L8 2.600l.4 1.500 1.500.4 2.300-2.300a3.700 3.700 0 0 1-4.600 4.800L2.300 12.300a1.200 1.200 0 0 1-1.900-1.800L5.700 5.100A3.700 3.700 0 0 1 8.800 0z" fill="#afb1b3"/></svg>
<div class="abs" style="left:24px;top:539px;width:17px;height:1px;background:#515456;"></div>
<div class="abs" style="left:28px;top:550px;width:9.5px;height:9.3px;background:#606366;"></div>
<svg style="left:26px;top:573.5px;" width="13.5" height="10.5" viewBox="0 0 13.500 10.500"><path d="M0 2h3.300l1-2h4.900l1 2H13.500v8.500H0z" fill="#606366"/><circle cx="6.750" cy="6" r="2.600" fill="#3c3f41"/><circle cx="6.750" cy="6" r="1.400" fill="#606366"/></svg>
<svg style="left:27px;top:596px;" width="13" height="13" viewBox="0 0 13 13"><path d="M3.800 3.500a2.400 2.400 0 0 1 4.400 0z" fill="#606366"/><path d="M3 4.300h6v4.500a3 3 0 0 1-6 0z" fill="#606366"/><path d="M3 3.200L1.500 1.700M9 3.200l1.500-1.500M3 6H.5M9 6h2.500M3 8.500L1 10.500" stroke="#606366" stroke-width="1.100" fill="none"/><path d="M7 10.500l5.500-5M12.500 8.300V5.500H9.700M7.500 7l5 5.500" stroke="#606366" stroke-width="1.300" fill="none"/></svg>
<svg style="left:27px;top:619.5px;" width="12.5" height="13" viewBox="0 0 12.500 13"><path d="M4 0.600h8v11.800H4V9.500M4 3.500V.6" stroke="#606366" stroke-width="1.200" fill="none"/><path d="M0 6.500h7.500M5 3.700l2.800 2.800L5 9.300" stroke="#606366" stroke-width="1.200" fill="none"/></svg>
<div class="abs" style="left:24px;top:641px;width:17px;height:1px;background:#515456;"></div>
<svg style="left:27px;top:651px;" width="12" height="9.5" viewBox="0 0 12 9.500"><path d="M0 5.200h12v4.300H0zM0 0h5.500v4.200H0zM6.500 0H12v4.200H6.500z" fill="#afb1b3"/></svg>
<div class="abs" style="left:24px;top:670px;width:17px;height:1px;background:#515456;"></div>
<svg style="left:26px;top:679.5px;" width="13" height="12.5" viewBox="0 0 13 12.500"><path d="M8 0l5 5-1.300.400-2.600 2.600.200 2.300-1 1L5.500 8.500 .7 12.500 0 12l4-4.800L1.200 4.400l1-1 2.300.200L7.100 1z" fill="#afb1b3"/></svg>
<div class="abs" style="left:50px;top:443.700px;width:20.500px;height:20px;background:#5c6164;border-radius:2.500px"></div>
<div class="abs" style="left:74px;top:443.700px;width:20.500px;height:20px;background:#5c6164;border-radius:2.500px"></div>
<svg style="left:54.5px;top:449px;" width="11.5" height="9" viewBox="0 0 11.500 9"><path d="M1 4.800l3.300 3L10.500 1" stroke="#c3c5c6" stroke-width="1.700" fill="none"/></svg>
<svg style="left:78.3px;top:447.8px;" width="12" height="12" viewBox="0 0 12 12"><circle cx="6" cy="6" r="4.900" stroke="#c3c5c6" stroke-width="1.400" fill="none"/><path d="M2.700 9.300l6.600-6.600" stroke="#c3c5c6" stroke-width="1.400"/></svg>
<div class="abs" style="left:98.75px;top:444.5px;width:1px;height:18px;background:#4b4e50;"></div>
<svg style="left:107.5px;top:447.5px;" width="13" height="12.5" viewBox="0 0 13 12.500"><path d="M3 0v10.500M0 7.700l3 3.300 3-3.300" stroke="#afb1b3" stroke-width="1.500" fill="none"/><text x="7.300" y="5.300" font-size="6.500" font-family="Liberation Sans" font-weight="700" fill="#afb1b3">a</text><text x="7.500" y="12.300" font-size="6.500" font-family="Liberation Sans" font-weight="700" fill="#afb1b3">z</text></svg>
<svg style="left:131.75px;top:447.5px;" width="13.5" height="12.5" viewBox="0 0 13.500 12.500"><path d="M3 0v10.500M0 7.700l3 3.300 3-3.300" stroke="#afb1b3" stroke-width="1.500" fill="none"/><path d="M6.500 1.700h7M8 5.700h5.500M10 9.700h3.500" stroke="#afb1b3" stroke-width="1.700"/></svg>
<div class="abs" style="left:152.5px;top:444.5px;width:1px;height:18px;background:#4b4e50;"></div>
<svg style="left:160.5px;top:446.4px;" width="14.6" height="14.6" viewBox="0 0 16 16"><path d="M2 2h12M2 14h12" stroke="#afb1b3" stroke-width="1.500"/><path d="M8 4.200L5.200 7.200h5.600zM8 11.800l-2.800-3h5.600z" fill="#afb1b3"/></svg>
<svg style="left:184.5px;top:446.4px;" width="14.6" height="14.6" viewBox="0 0 16 16"><path d="M2 8h12" stroke="#afb1b3" stroke-width="1.500"/><path d="M8 6.300L5.200 2.500h5.600zM8 9.700l-2.800 3.800h5.600z" fill="#afb1b3"/></svg>
<div class="abs" style="left:206.25px;top:444.5px;width:1px;height:18px;background:#4b4e50;"></div>
<svg style="left:217px;top:448.2px;" width="9.5" height="11" viewBox="0 0 9.500 11"><path d="M4.750 11V1.500M.8 5l3.950-4 3.950 4" stroke="#5f6366" stroke-width="1.500" fill="none"/></svg>
<svg style="left:240.5px;top:448.2px;" width="9.5" height="11" viewBox="0 0 9.500 11"><path d="M4.750 0v9.500M.8 6l3.950 4 3.950-4" stroke="#afb1b3" stroke-width="1.500" fill="none"/></svg>
<svg style="left:262.5px;top:447px;" width="15" height="14" viewBox="0 0 15 14"><circle cx="6.300" cy="6.300" r="5.300" stroke="#afb1b3" stroke-width="1.500" fill="none"/><path d="M6.300 3v3.600l2.400 1.600" stroke="#afb1b3" stroke-width="1.300" fill="none"/><path d="M9.500 11h5l-2.500 3z" fill="#afb1b3" stroke="#3c3f41" stroke-width=".6"/></svg>
<svg style="left:302.5px;top:450.5px;" width="7" height="6" viewBox="0 0 7 6"><path d="M.5.500L3 3 .5 5.500M4 .5L6.500 3 4 5.500" stroke="#afb1b3" stroke-width=".9" fill="none"/></svg>
<svg style="left:316.8px;top:446.1px;" width="13.8" height="13.8" viewBox="0 0 16 16"><circle cx="8" cy="8" r="7" fill="#e6a63c"/><path d="M5 5l6 6M11 5l-6 6" stroke="#33363a" stroke-width="1.700" fill="none"/></svg>
<div class="t" style="left:335px;top:449.16px;font-size:11.4px;color:#d25252;transform:scaleX(0.9152);">Tests failed: 1</div>
<div class="t" style="left:403px;top:449.16px;font-size:11.4px;color:#868a8c;transform:scaleX(0.9291);">of 1 test – 15 ms</div>
<div class="abs" style="left:47px;top:467px;width:267px;height:18px;background:#0d293e;"></div>
<svg style="left:52px;top:474.5px;" width="8" height="5" viewBox="0 0 8 5"><path d="M.5.500L4 4l3.500-3.500" stroke="#b4b6b7" stroke-width="1.200" fill="none"/></svg>
<svg style="left:68.1px;top:470.1px;" width="13.8" height="13.8" viewBox="0 0 16 16"><circle cx="8" cy="8" r="7" fill="#e6a63c"/><path d="M5 5l6 6M11 5l-6 6" stroke="#33363a" stroke-width="1.700" fill="none"/></svg>
<div class="t" style="left:85px;top:471.96px;font-size:11.4px;color:#bbbbbb;transform:scaleX(0.9305);">ValidateISBNTests</div>
<div class="t" style="left:175.75px;top:471.96px;font-size:11.4px;color:#8a8d8f;transform:scaleX(0.9673);">(com.book.tdd)</div>
<div class="t" style="left:286.25px;top:472.44px;font-size:10.5px;color:#c4c6c7;transform:scaleX(0.8306);">15 ms</div>
<svg style="left:84.3px;top:488px;" width="13.8" height="13.8" viewBox="0 0 16 16"><circle cx="8" cy="8" r="7" fill="#e6a63c"/><path d="M5 5l6 6M11 5l-6 6" stroke="#33363a" stroke-width="1.700" fill="none"/></svg>
<div class="t" style="left:101.75px;top:490.46px;font-size:11.4px;color:#bbbbbb;transform:scaleX(0.9473);">checkValidThirteenDigitISBN</div>
<div class="t" style="left:286.25px;top:490.94px;font-size:10.5px;color:#6e7174;transform:scaleX(0.8306);">15 ms</div>
<div class="abs" style="left:327px;top:467.8px;width:425px;height:21.2px;background:#343434;"></div>
<div class="abs" style="left:519px;top:511.2px;width:152.5px;height:21.6px;background:#343434;"></div>
<div class="abs" style="left:1063px;top:533.075px;width:160.5px;height:21.6px;background:#343434;"></div>
<div class="cl" style="left:327px;top:473.00px;color:#bbbbbb"><span style="color:#9a9a9a">"C:\Program Files\Java\jdk1.8.0_301\bin\java.exe" ...</span></div>
<div class="cl" style="left:327px;top:516.75px;color:#bbbbbb"><span style="color:#ff6b68">java.lang.</span><span style="color:#8a8a8a;text-decoration:underline;text-decoration-thickness:.8px;text-underline-offset:2px">AssertionError</span><span style="color:#9a9a9a"> &lt;3 internal lines&gt;</span></div>
<div class="cl" style="left:327px;top:538.62px;color:#bbbbbb"><span style="color:#ff6b68">    at com.book.tdd.ValidateISBNTests.checkValidThirteenDigitISBN(</span><span style="color:#3580e0;text-decoration:underline;text-decoration-thickness:1px;text-underline-offset:2px">ValidateISBNTests.java:45</span><span style="color:#ff6b68">)</span><span style="color:#9a9a9a"> &lt;25 internal lines&gt;</span></div>
<div class="cl" style="left:327px;top:604.25px;color:#bbbbbb">Process finished with exit code -1</div>
<svg style="left:316.7px;top:516.8px;" width="9.5" height="9.5" viewBox="0 0 9.500 9.500"><path d="M.5.500h8.500v8.500H.5z" stroke="#5a5d5f" stroke-width="1" fill="#2b2b2b"/><path d="M2.500 4.750h4.500M4.750 2.500v4.500" stroke="#5a5d5f" stroke-width="1"/></svg>
<svg style="left:316.7px;top:538.675px;" width="9.5" height="9.5" viewBox="0 0 9.500 9.500"><path d="M.5.500h8.500v8.500H.5z" stroke="#5a5d5f" stroke-width="1" fill="#2b2b2b"/><path d="M2.500 4.750h4.500M4.750 2.500v4.500" stroke="#5a5d5f" stroke-width="1"/></svg>
<svg style="left:1363px;top:475px;" width="10" height="11" viewBox="0 0 10 11"><path d="M5 11V1.500M1 5.200l4-4 4 4" stroke="#afb1b3" stroke-width="1.500" fill="none"/></svg>
<svg style="left:1363px;top:498px;" width="10" height="11" viewBox="0 0 10 11"><path d="M5 0v9.500M1 5.800l4 4 4-4" stroke="#afb1b3" stroke-width="1.500" fill="none"/></svg>
<svg style="left:1362px;top:521.5px;" width="12.5" height="13" viewBox="0 0 12.500 13"><path d="M0 1.300h12M0 10.300h3.500" stroke="#afb1b3" stroke-width="1.500"/><path d="M0 5.600h9.600a2.350 2.350 0 0 1 0 4.700H6.300" stroke="#afb1b3" stroke-width="1.500" fill="none"/><path d="M8.300 8l-2.300 2.300 2.300 2.300" stroke="#afb1b3" stroke-width="1.400" fill="none"/></svg>
<svg style="left:1362px;top:544.5px;" width="12" height="11.5" viewBox="0 0 12 11.500"><path d="M0 2h4.500M0 5.500h4.500M0 10.500h12" stroke="#afb1b3" stroke-width="1.500"/><path d="M8.500 0v7M5.800 4.500l2.700 2.800 2.700-2.800" stroke="#afb1b3" stroke-width="1.500" fill="none"/></svg>
<svg style="left:1361.5px;top:568.5px;" width="13.5" height="13.5" viewBox="0 0 13.500 13.500"><path d="M3 0h7.500v3H3z" fill="#afb1b3"/><path d="M0 4h13.500v6H11V8H2.500v2H0z" fill="#afb1b3"/><path d="M3.500 9h6.500v4H3.500z" fill="none" stroke="#afb1b3" stroke-width="1.200"/></svg>
<svg style="left:1363px;top:591.5px;" width="10" height="12" viewBox="0 0 10 12"><path d="M3.500 0h3v1.300H10v1.500H0V1.300h3.500zM1 4h8v7a1 1 0 0 1-1 1H2a1 1 0 0 1-1-1z" fill="#afb1b3"/></svg>
<div class="abs" style="left:20px;top:705px;width:47px;height:19px;background:#2d2f30;"></div>
<svg style="left:30px;top:710.7px;" width="7.5" height="9.5" viewBox="0 0 7.500 9.500"><path d="M0 0l7.500 4.750L0 9.500z" fill="#afb1b3"/></svg>
<div class="t" style="left:44px;top:711.45px;font-size:9.9px;color:#e0e0e0;transform:scaleX(0.8828);">Run</div>
<svg style="left:78px;top:710.9px;" width="10.5" height="9" viewBox="0 0 10.500 9"><path d="M0 .3h2v1.800H0zM0 3.600h2v1.800H0zM0 6.900h2v1.800H0zM3.300.3h7.200v1.800H3.300zM3.300 3.600h7.200v1.800H3.300zM3.300 6.900h7.200v1.800H3.300z" fill="#afb1b3"/></svg>
<div class="t" style="left:92.5px;top:711.45px;font-size:9.9px;color:#bbbbbb;transform:scaleX(0.8992);">TODO</div>
<svg style="left:138px;top:710.0px;" width="10.5" height="10.5" viewBox="0 0 10.500 10.500"><circle cx="5.250" cy="5.250" r="5.200" fill="#afb1b3"/><path d="M5.250 2.300v3.600M5.250 7v1.400" stroke="#3c3f41" stroke-width="1.600"/></svg>
<div class="t" style="left:152.5px;top:711.45px;font-size:9.9px;color:#bbbbbb;transform:scaleX(0.9588);">Problems</div>
<svg style="left:211px;top:709.2px;" width="11.5" height="12" viewBox="0 0 11.500 12"><path d="M3.700 3.200a2.200 2.200 0 0 1 4.100 0z" fill="#afb1b3"/><path d="M3 4h5.500v4.500a2.750 2.750 0 0 1-5.500 0z" fill="#afb1b3"/><path d="M3 3L1.500 1.500M8.500 3L10 1.500M3 6H.5M8.500 6H11M3 8.500L1 10.500M8.500 8.500l2 2" stroke="#afb1b3" stroke-width="1.100" fill="none"/></svg>
<div class="t" style="left:226.5px;top:711.45px;font-size:9.9px;color:#bbbbbb;transform:scaleX(0.9619);">Debug</div>
<svg style="left:272.5px;top:709.2px;" width="12.5" height="12.5" viewBox="0 0 12.500 12.500"><circle cx="5" cy="5" r="4.200" stroke="#afb1b3" stroke-width="1.300" fill="none"/><path d="M5 2.500v2.700l1.500 1" stroke="#afb1b3" stroke-width="1.100" fill="none"/><path d="M6.500 5.500l6 3.500-6 3.500z" fill="#afb1b3" stroke="#3c3f41" stroke-width=".8"/></svg>
<div class="t" style="left:288.25px;top:711.45px;font-size:9.9px;color:#bbbbbb;transform:scaleX(0.9750);">Profiler</div>
<svg style="left:338px;top:710.2px;" width="11.5" height="10" viewBox="0 0 11.500 10"><path d="M0 0h11.500v10H0z" fill="#afb1b3"/><path d="M2 2.500L4.500 5 2 7.500M5.500 7.500h4" stroke="#3c3f41" stroke-width="1.200" fill="none"/></svg>
<div class="t" style="left:353px;top:711.45px;font-size:9.9px;color:#bbbbbb;transform:scaleX(0.9778);">Terminal</div>
<svg style="left:407.5px;top:709.7px;" width="11.5" height="11.5" viewBox="0 0 11.500 11.500"><circle cx="5.750" cy="5.750" r="5.700" fill="#afb1b3"/><path d="M4.300 3l4.400 2.750L4.300 8.500z" fill="#3c3f41"/></svg>
<div class="t" style="left:423px;top:711.45px;font-size:9.9px;color:#bbbbbb;transform:scaleX(0.8977);">Services</div>
<svg style="left:475px;top:709.5px;" width="12.5" height="12.5" viewBox="0 0 12.500 12.500"><path d="M.5 4.300L3.800 1l1 .5L8 1.200l.7.700-2.500 2.500 6 6-1.300 1.300-6-6-2 2-.7-.7.300-1.800z" fill="#afb1b3"/></svg>
<div class="t" style="left:491px;top:711.45px;font-size:9.9px;color:#bbbbbb;transform:scaleX(0.9104);">Build</div>
<svg style="left:529px;top:709.7px;" width="12" height="12" viewBox="0 0 12 12"><path d="M6 0l6 3-6 3-6-3z" fill="#afb1b3"/><path d="M.8 5.600L6 8.200l5.200-2.600M.8 8.400L6 11l5.200-2.600" stroke="#afb1b3" stroke-width="1.300" fill="none"/></svg>
<div class="t" style="left:544.5px;top:711.45px;font-size:9.9px;color:#bbbbbb;transform:scaleX(0.9344);">Dependencies</div>
<div class="abs" style="left:1314px;top:709.600px;width:12px;height:11.500px;border-radius:6px;background:#499c54"></div>
<div class="t" style="left:1318.2px;top:711.89px;font-size:8.5px;color:#ffffff;font-weight:700;transform:scaleX(1.0000);">1</div>
<div class="t" style="left:1330.5px;top:711.45px;font-size:9.9px;color:#bbbbbb;transform:scaleX(0.9217);">Event Log</div>
<svg style="left:5px;top:728.7px;" width="12" height="11.5" viewBox="0 0 12 11.500"><path d="M2.700 .6h8.700v8.200H2.700z" stroke="#9da0a2" stroke-width="1.200" fill="none"/><path d="M.6 2.800V10.900H9.300" stroke="#9da0a2" stroke-width="1.200" fill="none"/></svg>
<div class="t" style="left:25px;top:729.06px;font-size:11.4px;color:#bbbbbb;transform:scaleX(0.9359);">Tests failed: 1, passed: 0 (moments ago)</div>
<div class="t" style="left:1217px;top:729.06px;font-size:11.4px;color:#bbbbbb;transform:scaleX(0.8942);">42:34</div>
<div class="t" style="left:1254px;top:729.06px;font-size:11.4px;color:#bbbbbb;transform:scaleX(0.7563);">CRLF</div>
<div class="t" style="left:1288px;top:729.06px;font-size:11.4px;color:#bbbbbb;transform:scaleX(0.8674);">UTF-8</div>
<div class="t" style="left:1327.5px;top:729.06px;font-size:11.4px;color:#bbbbbb;transform:scaleX(0.8883);">4 spaces</div>
<svg style="left:1378px;top:729px;" width="12" height="10.5" viewBox="0 0 12 10.500"><path d="M4 4.500h7.500v6H4z" fill="#afb1b3"/><path d="M5.500 4.500V3a2.200 2.200 0 0 0-4.400 0v1.500" stroke="#afb1b3" stroke-width="1.300" fill="none"/></svg>
</body></html>
